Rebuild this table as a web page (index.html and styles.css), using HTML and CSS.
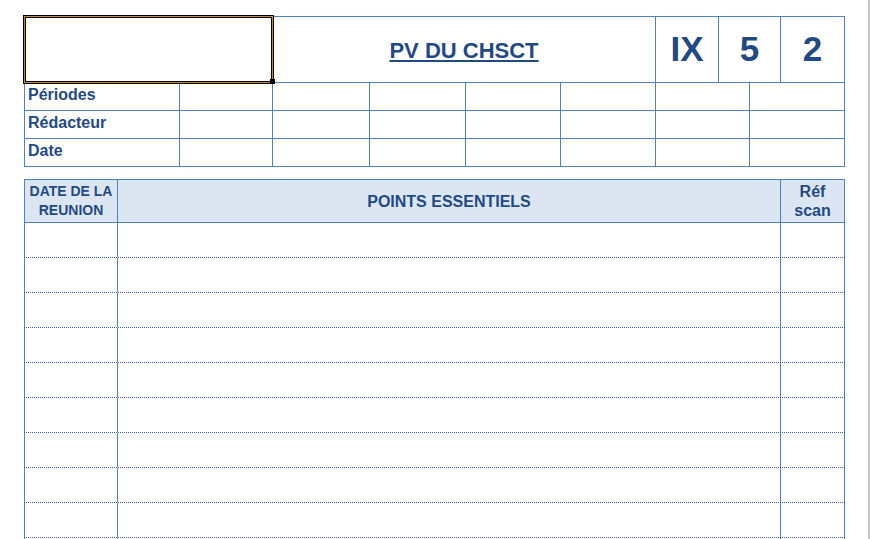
FILE: index.html
```html
<!DOCTYPE html>
<html lang="fr">
<head>
    <meta charset="UTF-8">
    <title>PV du CHSCT</title>
<link rel="stylesheet" href="styles.css">
</head>
<body>
<div class="head">
    <div class="sel"><span class="grip"></span></div>
    <div class="title"><span>PV DU CHSCT</span></div>
    <div class="code">IX</div>
    <div class="code span2">5</div>
    <div class="code">2</div>

    <div class="label">Périodes</div>
    <div></div><div></div><div></div><div></div><div></div>
    <div class="span2"></div><div class="span2"></div>

    <div class="label">Rédacteur</div>
    <div></div><div></div><div></div><div></div><div></div>
    <div class="span2"></div><div class="span2"></div>

    <div class="label">Date</div>
    <div></div><div></div><div></div><div></div><div></div>
    <div class="span2"></div><div class="span2"></div>
</div>

<div class="log">
    <div class="row hdr">
        <div class="c-date">DATE DE LA<br>REUNION</div>
        <div class="c-pts">POINTS ESSENTIELS</div>
        <div class="c-ref">Réf<br>scan</div>
    </div>
    <div class="row"><div></div><div></div><div></div></div>
    <div class="row"><div></div><div></div><div></div></div>
    <div class="row"><div></div><div></div><div></div></div>
    <div class="row"><div></div><div></div><div></div></div>
    <div class="row"><div></div><div></div><div></div></div>
    <div class="row"><div></div><div></div><div></div></div>
    <div class="row"><div></div><div></div><div></div></div>
    <div class="row"><div></div><div></div><div></div></div>
    <div class="row"><div></div><div></div><div></div></div>
    <div class="row"><div></div><div></div><div></div></div>
</div>
</body>
</html>
```

FILE: styles.css
```css
html{overflow:hidden;}
body{margin:0;padding:16px 0 0 24px;width:870px;height:539px;box-sizing:border-box;overflow:hidden;
border-right:2px solid #c4c4c4;background:#fff;font-family:"Liberation Sans",Arial,sans-serif;color:#1f4a86;}

/* en-tete */
.head{display:grid;width:max-content;grid-template-columns:154px 92px 96px 95px 94px 94px 62px 30px 30px 63px;
grid-template-rows:65px 27px 27px 27px;gap:1px;padding:1px;background:#4f81c7;}
.head>div{background:#fff;}
.span2{grid-column:span 2;}
.sel{grid-column:span 2;position:relative;}
.sel::after{content:"";position:absolute;inset:-2px;border:1px solid #000;
box-shadow:inset 0 0 0 1px #c98a2e,inset 0 0 0 2px #000;}
.grip{position:absolute;right:-3px;bottom:-2px;width:5px;height:5px;background:#000;z-index:1;}
.title{grid-column:span 4;display:flex;align-items:center;justify-content:center;font-weight:bold;font-size:22px;padding-top:2px;box-sizing:border-box;}
.title span{text-decoration:underline;text-decoration-thickness:2px;text-underline-offset:2px;}
.code{display:flex;align-items:center;justify-content:center;font-weight:bold;font-size:35px;padding-bottom:2px;box-sizing:border-box;}
.label{font-weight:bold;font-size:16px;line-height:18px;padding:3px 0 0 3px;}

/* tableau */
.log{margin-top:12px;width:821px;}
.row{display:grid;grid-template-columns:93px 663px 65px;height:35px;box-sizing:border-box;border-bottom:1px dotted #3b5ea8;}
.row>div{border-left:1px solid #4f81c7;}
.row>div:last-child{border-right:1px solid #4f81c7;}
.row.hdr{height:44px;border-top:1px solid #4f81c7;border-bottom:1px solid #4f81c7;}
.hdr>div{background:#dce6f2;display:flex;align-items:center;justify-content:center;text-align:center;
font-weight:bold;line-height:19px;}
.c-date{font-size:14px;}
.c-pts{font-size:16px;}
.c-ref{font-size:16px;}
```
